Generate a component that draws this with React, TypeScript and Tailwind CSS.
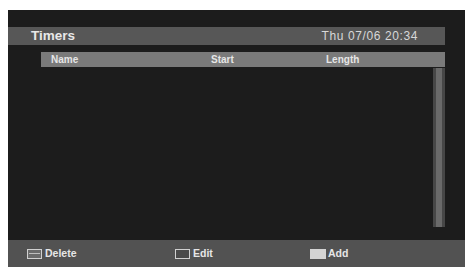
export default function App() {
  const font = { fontFamily: '"Liberation Sans", Arial, sans-serif' };
  return (
    <div className="w-[468px] h-[267px] bg-white pl-[8px] pt-[10px] pr-[3px] overflow-hidden" style={font}>
      <div className="h-full bg-[#1c1c1c] flex flex-col">
        <div className="h-[17px]" />
        <div className="h-[18px] mr-[20px] bg-[#575757] flex items-center justify-between pl-[23px] pr-[27px]">
          <span className="text-[13.5px] font-bold text-[#e8e8e8] leading-none">Timers</span>
          <span className="text-[12px] text-[#d8d8d8] leading-none tracking-[0.6px]">Thu 07/06 20:34</span>
        </div>
        <div className="mt-[7px] h-[15px] ml-[33px] mr-[20px] bg-[#7a7a7a] flex items-center text-[10px] font-bold text-[#e6e6e6] leading-none">
          <span className="ml-[10px] w-[160px]">Name</span>
          <span className="w-[115px]">Start</span>
          <span>Length</span>
        </div>
        <div className="flex-1 flex justify-end mr-[20px] pt-[1px] pb-[13px]">
          <div className="w-[12px] h-full bg-[#474747] flex justify-center">
            <div className="w-[6px] h-full bg-[#6a6a6a]" />
          </div>
        </div>
        <div className="h-[27px] bg-[#525252] flex items-center text-[10.5px] font-bold text-[#e6e6e6] leading-none">
          <div className="flex items-center ml-[19px] w-[148px]">
            <div className="w-[15px] h-[10px] border border-[#d0d0d0] bg-[#6a6a6a] flex items-center justify-center">
              <div className="w-[11px] h-[1px] bg-[#bdbdbd]" />
            </div>
            <span className="ml-[3px]">Delete</span>
          </div>
          <div className="flex items-center w-[135px]">
            <div className="w-[15px] h-[10px] border border-[#d0d0d0] bg-[#4a4a4a]" />
            <span className="ml-[3px]">Edit</span>
          </div>
          <div className="flex items-center">
            <div className="w-[16px] h-[10px] bg-[#d4d4d4]" />
            <span className="ml-[2px]">Add</span>
          </div>
        </div>
      </div>
    </div>
  );
}
